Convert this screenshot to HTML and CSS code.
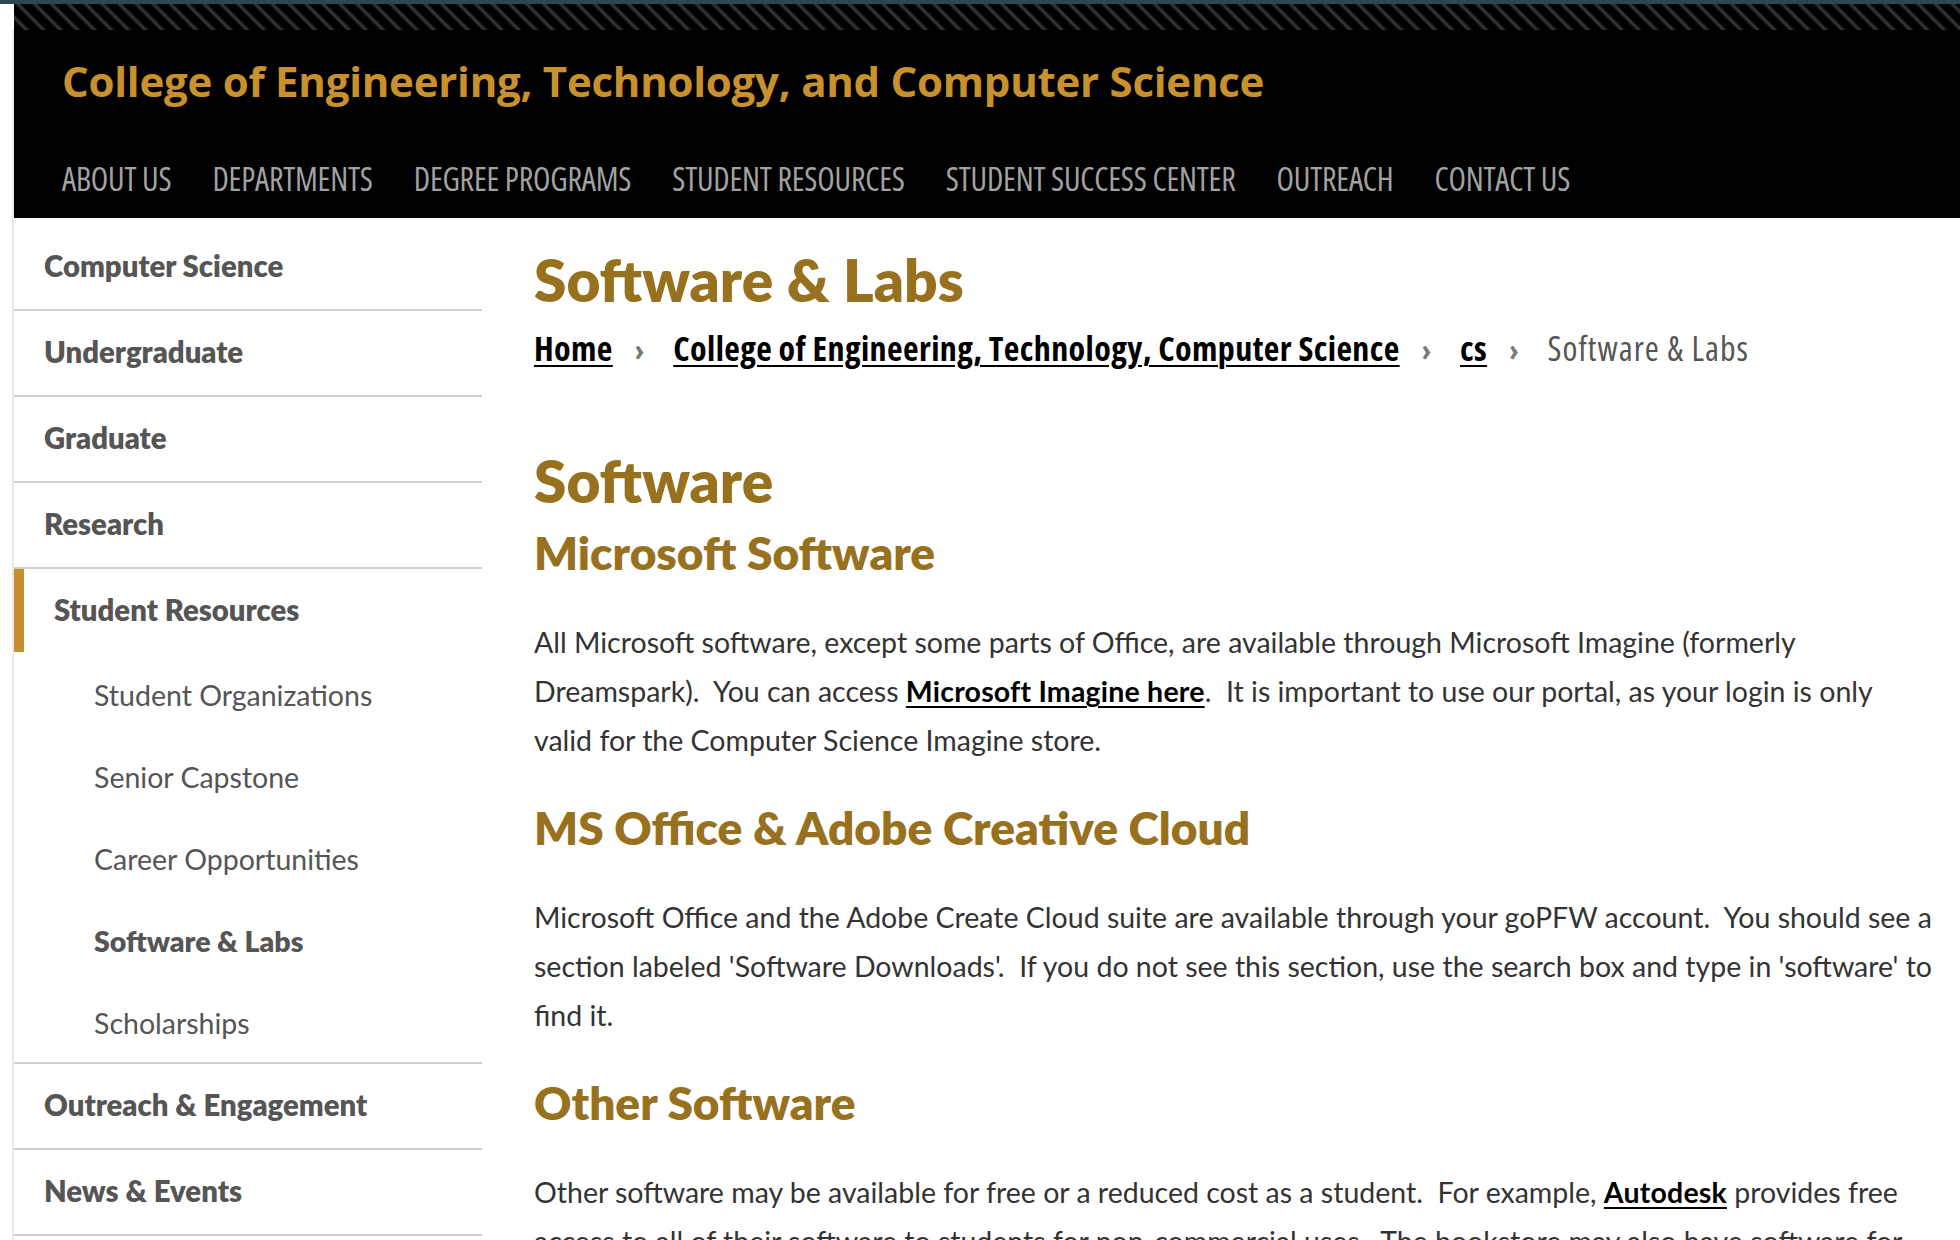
FILE: index.html
```html
<!DOCTYPE html>
<html lang="en">
<head>
<meta charset="utf-8">
<title>Software &amp; Labs</title>
<link rel="stylesheet" href="styles.css">
</head>
<body>
<div class="topbar"></div>
<div class="stripes"></div>
<div class="page">
  <header class="site-header">
    <div class="site-title">College of Engineering, Technology, and Computer Science</div>
    <nav class="main-nav">
      <a href="#">ABOUT US</a>
      <a href="#">DEPARTMENTS</a>
      <a href="#">DEGREE PROGRAMS</a>
      <a href="#">STUDENT RESOURCES</a>
      <a href="#">STUDENT SUCCESS CENTER</a>
      <a href="#">OUTREACH</a>
      <a href="#">CONTACT US</a>
    </nav>
  </header>
  <div class="layout">
    <aside class="sidebar">
      <a class="side-item" href="#">Computer Science</a>
      <a class="side-item" href="#">Undergraduate</a>
      <a class="side-item" href="#">Graduate</a>
      <a class="side-item" href="#">Research</a>
      <div class="side-group">
        <a class="side-item active" href="#">Student Resources</a>
        <ul class="sub-list">
          <li><a href="#">Student Organizations</a></li>
          <li><a href="#">Senior Capstone</a></li>
          <li><a href="#">Career Opportunities</a></li>
          <li><a class="current" href="#">Software &amp; Labs</a></li>
          <li><a href="#">Scholarships</a></li>
        </ul>
      </div>
      <a class="side-item" href="#">Outreach &amp; Engagement</a>
      <a class="side-item" href="#">News &amp; Events</a>
    </aside>
    <main class="content">
      <h1 class="page-title">Software &amp; Labs</h1>
      <div class="breadcrumb">
        <a href="#">Home</a><span class="sep">›</span><a href="#">College of Engineering, Technology, Computer Science</a><span class="sep">›</span><a href="#">cs</a><span class="sep">›</span><span class="here">Software &amp; Labs</span>
      </div>
      <h2 class="sec-title">Software</h2>
      <h3 class="sub-title">Microsoft Software</h3>
      <p>All Microsoft software, except some parts of Office, are available through Microsoft Imagine (formerly<br>Dreamspark).&nbsp; You can access <a href="#">Microsoft Imagine here</a>.&nbsp; It is important to use our portal, as your login is only<br>valid for the Computer Science Imagine store.</p>
      <h3 class="sub-title">MS Office &amp; Adobe Creative Cloud</h3>
      <p>Microsoft Office and the Adobe Create Cloud suite are available through your goPFW account.&nbsp; You should see a<br>section labeled 'Software Downloads'.&nbsp; If you do not see this section, use the search box and type in 'software' to<br>find it.</p>
      <h3 class="sub-title">Other Software</h3>
      <p>Other software may be available for free or a reduced cost as a student.&nbsp; For example, <a href="#">Autodesk</a> provides free<br>access to all of their software to students for non-commercial uses.&nbsp; The bookstore may also have software for</p>
    </main>
  </div>
</div>
</body>
</html>
```
FILE: styles.css
```css
* { box-sizing: border-box; }

html, body {
  margin: 0;
  padding: 0;
  background: #fff;
  overflow: hidden;
}

body {
  font-family: "Lato", "Open Sans", sans-serif;
  color: #333;
}

a { color: inherit; text-decoration: none; }

.topbar {
  height: 4px;
  background: #2c4652;
}

.stripes {
  height: 26px;
  margin-left: 14px;
  background-color: #000;
  background-image: repeating-linear-gradient(45deg, #000 0px, #000 6px, #3b3b3b 9px, #000 12px);
}

.page {
  margin-left: 12px;
  border-left: 2px solid #e9e9e9;
  min-height: 1210px;
}

/* Header */
.site-header {
  background: #000;
  padding: 28px 0 19px 48px;
}

.site-title {
  font-family: "Open Sans", sans-serif;
  font-size: 42px;
  line-height: 46px;
  font-weight: 700;
  color: #c8912b;
  letter-spacing: -0.25px;
}

.main-nav {
  display: flex;
  gap: 41px;
  margin-top: 55px;
}

.main-nav a {
  font-family: "Open Sans", sans-serif;
  font-size: 32px;
  line-height: 40px;
  font-stretch: 75%;
  font-weight: 400;
  color: #a2a2a2;
  letter-spacing: -0.2px;
}

/* Layout */
.layout {
  display: flex;
  gap: 52px;
}

.sidebar {
  width: 468px;
  flex: none;
  display: flex;
  flex-direction: column;
  padding-top: 7px;
}

.side-item {
  display: block;
  height: 86px;
  padding: 21px 0 0 30px;
  border-bottom: 2px solid #cfcfcf;
  font-size: 29.3px;
  line-height: 40px;
  font-weight: 800;
  color: #555;
}

.side-group {
  border-bottom: 2px solid #cfcfcf;
}

.side-item.active {
  border-bottom: none;
  border-left: 10px solid #c58f2a;
  height: 83px;
  padding-left: 30px;
  padding-top: 21px;
}

.sub-list {
  list-style: none;
  margin: 0;
  padding: 0 0 0 80px;
}

.sub-list li {
  height: 82px;
  padding-top: 23px;
}

.sub-list a {
  font-size: 28.5px;
  line-height: 40px;
  font-weight: 400;
  color: #555;
}

.sub-list a.current {
  font-weight: 800;
}

/* Content */
.content {
  flex: 1;
  min-width: 0;
  padding: 25px 0 0 0;
}

.page-title,
.sec-title {
  margin: 0;
  font-size: 58.5px;
  line-height: 72px;
  font-weight: 800;
  color: #98711f;
}

.breadcrumb {
  margin-top: 13px;
  font-family: "Open Sans", sans-serif;
  font-size: 34px;
  line-height: 40px;
  font-stretch: 75%;
  display: flex;
  align-items: baseline;
}

.breadcrumb a {
  font-weight: 700;
  color: #000;
  letter-spacing: 0.4px;
  text-decoration: underline;
  text-decoration-thickness: 2px;
  text-underline-offset: 4px;
}

.breadcrumb .sep {
  color: #7a7a7a;
  font-size: 31px;
  font-weight: 700;
  margin: 0 29px 0 22px;
}

.breadcrumb .here {
  color: #555;
  font-weight: 400;
  letter-spacing: 1px;
}

.sec-title {
  margin-top: 75px;
}

.sub-title {
  margin: 34px 0 36px;
  font-size: 46px;
  line-height: 58px;
  font-weight: 800;
  color: #98711f;
}

.sec-title + .sub-title {
  margin-top: 8px;
}

.content p {
  margin: 0;
  font-size: 28.5px;
  line-height: 49px;
  color: #333;
}

.content p a {
  font-weight: 700;
  color: #000;
  letter-spacing: 0.2px;
  text-decoration: underline;
  text-decoration-thickness: 2px;
  text-underline-offset: 4px;
}
```
